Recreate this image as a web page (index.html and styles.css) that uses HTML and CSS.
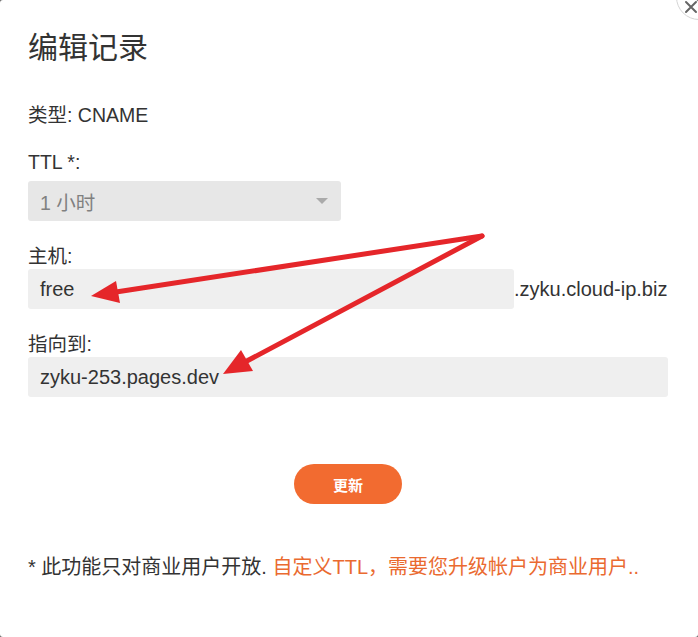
FILE: index.html
```html
<!DOCTYPE html>
<html lang="zh-CN">
<head>
<meta charset="utf-8">
<title>编辑记录</title>
<link rel="stylesheet" href="styles.css">
</head>
<body>
<div class="modal">
  <button class="close" aria-label="关闭">
    <svg width="14" height="14" viewBox="0 0 14 14"><path d="M2 2L12 12M12 2L2 12" stroke="#666" stroke-width="2" stroke-linecap="round"/></svg>
  </button>
  <h1 class="title">编辑记录</h1>
  <div class="type">类型: CNAME</div>
  <div class="label label-ttl">TTL *:</div>
  <div class="select">
    <span>1 小时</span>
    <span class="caret"></span>
  </div>
  <div class="label">主机:</div>
  <div class="row">
    <div class="input input-host">free</div>
    <span class="suffix">.zyku.cloud-ip.biz</span>
  </div>
  <div class="label">指向到:</div>
  <div class="input">zyku-253.pages.dev</div>
  <div class="actions">
    <button class="btn">更新</button>
  </div>
  <p class="note">* 此功能只对商业用户开放. <span class="accent">自定义TTL，需要您升级帐户为商业用户..</span></p>
  <svg class="arrows" width="698" height="637" viewBox="0 0 698 637">
    <g stroke="#e5262a" stroke-width="5" stroke-linecap="round" fill="none">
      <line x1="482" y1="236" x2="116" y2="292"/>
      <line x1="482" y1="236" x2="245" y2="362"/>
    </g>
    <g fill="#e5262a">
      <polygon points="91,296 120,303 116,281"/>
      <polygon points="223,374 253,371 241,350"/>
    </g>
  </svg>
</div>
</body>
</html>
```

FILE: styles.css
```css
* { box-sizing: border-box; }
html, body {
  margin: 0;
  padding: 0;
  background: #6b6b6b;
}
.modal {
  position: relative;
  width: 698px;
  height: 637px;
  background: #fff;
  border-radius: 3px;
  padding: 30px 28px 0 28px;
  font-family: "Liberation Sans", "Noto Sans CJK SC", sans-serif;
  color: #333;
  overflow: hidden;
}
.close {
  position: absolute;
  top: -26px;
  right: -24px;
  width: 46px;
  height: 46px;
  border-radius: 50%;
  border: 1px solid #d4d4d4;
  background: #fff;
  padding: 0;
  display: flex;
  align-items: flex-end;
  justify-content: flex-start;
}
.close svg {
  margin: 0 0 5px 7px;
}
.title {
  margin: 0;
  font-size: 30px;
  line-height: 36px;
  font-weight: 400;
  color: #333;
}
.type {
  margin-top: 38px;
  font-size: 19.5px;
  line-height: 22px;
}
.label {
  margin-top: 24px;
  font-size: 19.5px;
  line-height: 22px;
  margin-bottom: 2px;
}
.label-ttl {
  margin-top: 25px;
  margin-bottom: 8px;
}
.select {
  width: 313px;
  height: 40px;
  background: #e7e7e7;
  border-radius: 3px;
  display: flex;
  align-items: center;
  justify-content: space-between;
  padding: 0 13px 0 12px;
  font-size: 19.5px;
  color: #808080;
}
.caret {
  width: 0;
  height: 0;
  border-left: 6px solid transparent;
  border-right: 6px solid transparent;
  border-top: 6px solid #aaa;
}
.row {
  display: flex;
  align-items: center;
}
.input {
  height: 40px;
  background: #efefef;
  border-radius: 3px;
  display: flex;
  align-items: center;
  padding: 0 12px;
  font-size: 20px;
  color: #333;
  width: 640px;
}
.input-host {
  width: 486px;
}
.suffix {
  font-size: 20px;
  color: #333;
}
.actions {
  margin-top: 67px;
  display: flex;
  justify-content: center;
}
.btn {
  width: 108px;
  height: 40px;
  border: none;
  border-radius: 20px;
  background: #f26b30;
  color: #fff;
  font-family: "Noto Sans CJK SC", sans-serif;
  font-weight: 700;
  font-size: 15px;
  margin-right: 2px;
}
.note {
  margin: 52px 0 0 0;
  font-size: 20px;
  line-height: 22px;
  color: #333;
}
.accent {
  color: #ea6a30;
}
.arrows {
  position: absolute;
  left: 0;
  top: 0;
  pointer-events: none;
}
```
